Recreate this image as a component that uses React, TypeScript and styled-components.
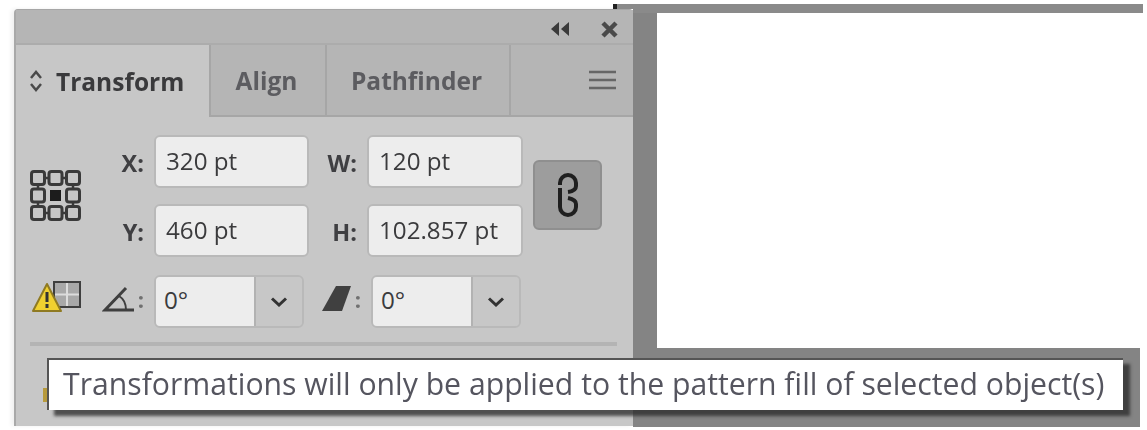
import React from "react";
import styled, { createGlobalStyle } from "styled-components";

const GlobalStyle = createGlobalStyle`
  html, body {
    margin: 0;
    padding: 0;
    background: #fff;
    overflow: hidden;
  }
`;

const Workspace = styled.div`
  position: relative;
  display: flex;
  align-items: flex-start;
  width: 1147px;
  height: 430px;
  padding: 4px 0 0 14px;
  box-sizing: border-box;
  overflow: hidden;
  font-family: "Open Sans", "Liberation Sans", sans-serif;
  filter: blur(0.6px);
`;

const Panel = styled.div`
  display: flex;
  flex-direction: column;
  width: 619px;
  height: 417px;
  margin-top: 5px;
  box-sizing: border-box;
  background: #c7c7c7;
  border-left: 2px solid #a9a9a9;
  border-top: 1px solid #a6a6a6;
  border-top-left-radius: 4px;
  border-top-right-radius: 4px;
  box-shadow: -3px 0 4px rgba(0, 0, 0, 0.06);
`;

const TitleBar = styled.div`
  display: flex;
  align-items: center;
  justify-content: flex-end;
  gap: 31px;
  height: 35px;
  padding: 5px 15px 0 0;
  box-sizing: border-box;
  background: #b5b5b5;
  border-bottom: 2px solid #acacac;
  color: #4a4a4a;
`;

const Tabs = styled.div`
  display: flex;
  height: 72px;
`;

const Tab = styled.div<{ $active?: boolean; $width: number }>`
  display: flex;
  align-items: center;
  justify-content: ${(p) => (p.$active ? "flex-start" : "center")};
  gap: 13px;
  width: ${(p) => p.$width}px;
  padding: ${(p) => (p.$active ? "0 0 0 13px" : "0 3px 0 0")};
  box-sizing: border-box;
  font-size: 24.5px;
  font-weight: 700;
  color: ${(p) => (p.$active ? "#3a3a3c" : "#5c5c60")};
  background: ${(p) => (p.$active ? "#c7c7c7" : "#b5b5b5")};
  border-right: 2px solid #a6a6a6;
  border-bottom: ${(p) => (p.$active ? "none" : "2px solid #a6a6a6")};
`;

const TabFill = styled.div`
  flex: 1;
  display: flex;
  align-items: center;
  justify-content: flex-end;
  padding-right: 17px;
  background: #b5b5b5;
  border-bottom: 2px solid #a6a6a6;
`;

const Body = styled.div`
  display: flex;
  flex-direction: column;
  padding: 18px 0 0 14px;
`;

const TopArea = styled.div`
  display: flex;
  align-items: center;
`;

const FieldGrid = styled.div`
  display: grid;
  grid-template-columns: 64px 155px 58px 156px;
  row-gap: 16px;
  align-items: center;
  margin-left: 8px;
`;

const Label = styled.div`
  font-size: 23.5px;
  font-weight: 700;
  color: #3f3f42;
  text-align: right;
  padding-right: 10px;
  padding-top: 3px;
`;

const Input = styled.div`
  display: flex;
  align-items: center;
  height: 53px;
  padding: 0 0 3px 10px;
  box-sizing: border-box;
  background: #ededed;
  border: 2px solid #b9b9b9;
  border-radius: 6px;
  font-size: 24.2px;
  color: #3b3b3d;
  white-space: nowrap;
`;

const LinkButton = styled.div`
  display: flex;
  align-items: center;
  justify-content: center;
  width: 69px;
  height: 70px;
  margin: -2px 0 0 10px;
  box-sizing: border-box;
  background: #9d9d9d;
  border: 2px solid #8f8f8f;
  border-radius: 6px;
`;

const AngleRow = styled.div`
  display: flex;
  align-items: center;
  height: 53px;
  margin-top: 18px;
`;

const WarningSlot = styled.div`
  display: flex;
  margin: 0 0 8px 2px;
`;

const AngleLabel = styled.div<{ $width: number }>`
  display: flex;
  align-items: center;
  justify-content: flex-end;
  gap: 3px;
  width: ${(p) => p.$width}px;
  padding: 0 10px 6px 0;
  box-sizing: border-box;
  font-size: 22px;
  font-weight: 700;
  color: #707070;
`;

const AngleSelect = styled.div`
  display: flex;
  width: 150px;
  height: 53px;
  box-sizing: border-box;
  border: 2px solid #b9b9b9;
  border-radius: 6px;
  overflow: hidden;
`;

const AngleValue = styled.div`
  flex: 1;
  display: flex;
  align-items: center;
  padding: 0 0 4px 8px;
  background: #ededed;
  font-size: 24.2px;
  color: #3b3b3d;
`;

const AngleCaret = styled.div`
  display: flex;
  align-items: center;
  justify-content: center;
  width: 46px;
  background: #c7c7c7;
  border-left: 2px solid #b2b2b2;
`;

const Separator = styled.div`
  width: 587px;
  height: 4px;
  margin: 14px 0 0 0;
  background: #b4b4b4;
`;

const HiddenRow = styled.div`
  height: 14px;
  width: 4px;
  margin: 42px 0 0 13px;
  background: #b79a3c;
`;

const Pasteboard = styled.div`
  position: relative;
  width: 507px;
  height: 423px;
  padding: 9px 0 0 24px;
  box-sizing: border-box;
  background: #848484;
  &::before {
    content: "";
    position: absolute;
    left: -20px;
    top: 0;
    width: 530px;
    height: 9px;
    background: linear-gradient(90deg, #222 0 4px, #8a8a8a 4px);
    clip-path: polygon(0 0, 100% 0, 100% 100%, 20px 100%, 20px 5px, 0 5px);
  }
`;

const Artboard = styled.div`
  width: 490px;
  height: 335px;
  background: #fff;
`;

const Tooltip = styled.div`
  position: absolute;
  left: 47px;
  top: 358px;
  width: 1076px;
  height: 52px;
  padding: 0 0 4px 14px;
  display: flex;
  align-items: center;
  box-sizing: border-box;
  background: #fff;
  border-left: 2px solid #555;
  border-top: 2px solid #555;
  box-shadow: 7px 6px 3px rgba(40, 40, 40, 0.75);
  font-size: 30.2px;
  color: #55555f;
  white-space: nowrap;
`;

const RefPoint = () => {
  const cells = [1.5, 19, 36.5];
  return (
    <svg width="52" height="52" viewBox="0 0 52 52" fill="none" stroke="#3a3a3a" strokeWidth="3">
      {cells.flatMap((y) =>
        cells.map((x) =>
          x === 19 && y === 19 ? (
            <rect key={`${x}-${y}`} x={x + 1} y={y + 1} width="11" height="11" fill="#1c1c1c" stroke="none" />
          ) : (
            <rect key={`${x}-${y}`} x={x} y={y} width="13" height="13" rx="2.5" />
          )
        )
      )}
      <path d="M14.5 8h4.500M32 8h4.500M14.5 43h4.500M32 43h4.500M8 14.500v4.500M8 32v4.500M43 14.500v4.500M43 32v4.500" strokeWidth="2.500" />
    </svg>
  );
};

const WarningIcon = () => (
  <svg width="50" height="33" viewBox="0 0 50 33">
    <rect x="22" y="1" width="26" height="25" fill="#a8a8a8" stroke="#3f3f3f" strokeWidth="2" />
    <path d="M35 2v23M23 13.500h24" stroke="#dcdcdc" strokeWidth="2" />
    <path d="M15 3 L29 30 H1 Z" fill="#f0d030" stroke="#8f7a22" strokeWidth="2" strokeLinejoin="round" />
    <path d="M15 11v10M15 23v4" stroke="#333" strokeWidth="3" />
  </svg>
);

const Caret = () => (
  <svg width="18" height="10" viewBox="0 0 18 10" fill="none" stroke="#333" strokeWidth="3">
    <path d="M2 1.500l7 6.500 7-6.500" />
  </svg>
);

const App: React.FC = () => (
  <>
    <GlobalStyle />
    <Workspace>
      <Panel>
        <TitleBar>
          <svg width="20" height="14" viewBox="0 0 20 14" fill="#3a3a3a">
            <path d="M9 0v14L1 7zM19 0v14l-8-7z" />
          </svg>
          <svg width="17" height="17" viewBox="0 0 17 17" stroke="#4a4a4a" strokeWidth="4.500">
            <path d="M2 2l13 13M15 2L2 15" />
          </svg>
        </TitleBar>
        <Tabs>
          <Tab $active $width={195}>
            <svg width="14" height="24" viewBox="0 0 14 24" fill="none" stroke="#4a4a4a" strokeWidth="2.500">
              <path d="M2 9l5-6 5 6M2 15l5 6 5-6" />
            </svg>
            Transform
          </Tab>
          <Tab $width={116}>Align</Tab>
          <Tab $width={184}>Pathfinder</Tab>
          <TabFill>
            <svg width="27" height="20" viewBox="0 0 27 20" stroke="#666" strokeWidth="2.500">
              <path d="M0 2h27M0 10h27M0 18h27" />
            </svg>
          </TabFill>
        </Tabs>
        <Body>
          <TopArea>
            <RefPoint />
            <FieldGrid>
              <Label>X:</Label>
              <Input>320 pt</Input>
              <Label>W:</Label>
              <Input>120 pt</Input>
              <Label>Y:</Label>
              <Input>460 pt</Input>
              <Label>H:</Label>
              <Input>102.857 pt</Input>
            </FieldGrid>
            <LinkButton>
              <svg width="22" height="44" viewBox="0 0 22 44" fill="none" stroke="#1f1f1f" strokeWidth="4">
                <path d="M3 12v-2a8 8 0 0 1 16 0v3c0 4-4 5.500-8 6" />
                <path d="M3 15v19a8 8 0 0 0 16 0v-3c0-3-3-5-8-6" />
              </svg>
            </LinkButton>
          </TopArea>
          <AngleRow>
            <WarningSlot>
              <WarningIcon />
            </WarningSlot>
            <AngleLabel $width={72}>
              <svg width="33" height="26" viewBox="0 0 33 26" fill="none" stroke="#3f3f3f" strokeWidth="3">
                <path d="M32 24H3L24 2" />
                <path d="M17 10c5 3 7 8 7 14" strokeWidth="2" />
              </svg>
              :
            </AngleLabel>
            <AngleSelect>
              <AngleValue>0°</AngleValue>
              <AngleCaret>
                <Caret />
              </AngleCaret>
            </AngleSelect>
            <AngleLabel $width={67}>
              <svg width="30" height="25" viewBox="0 0 30 25" fill="#404040">
                <path d="M14 0h15L20 25H0z" />
              </svg>
              :
            </AngleLabel>
            <AngleSelect>
              <AngleValue>0°</AngleValue>
              <AngleCaret>
                <Caret />
              </AngleCaret>
            </AngleSelect>
          </AngleRow>
          <Separator />
          <HiddenRow />
        </Body>
      </Panel>
      <Pasteboard>
        <Artboard />
      </Pasteboard>
      <Tooltip>Transformations will only be applied to the pattern fill of selected object(s)</Tooltip>
    </Workspace>
  </>
);

export default App;
